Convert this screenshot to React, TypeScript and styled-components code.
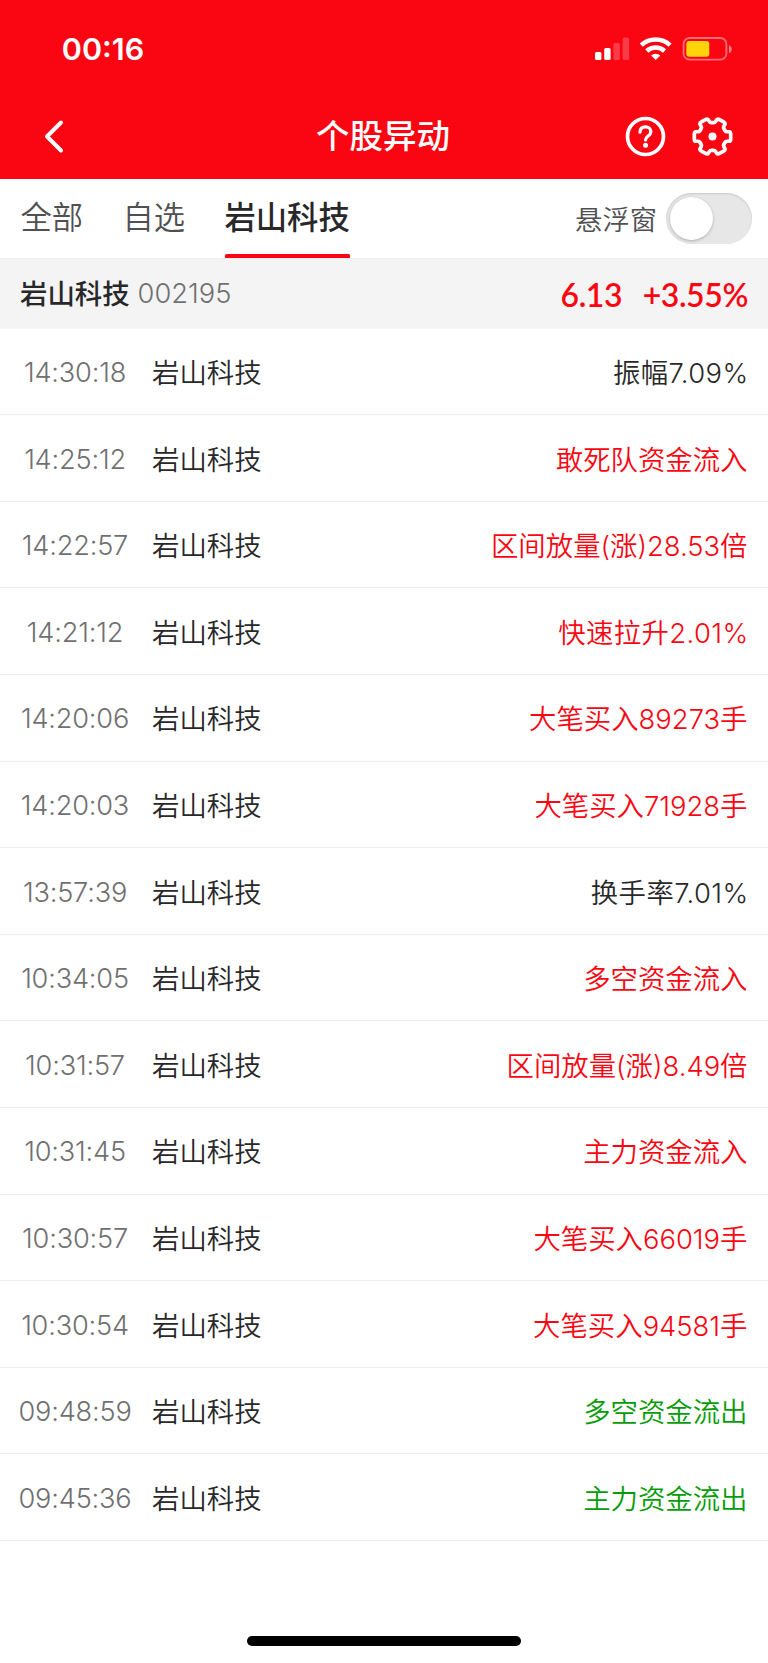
import React from 'react';
import styled, { createGlobalStyle } from 'styled-components';

const GlobalStyle = createGlobalStyle`
  * { box-sizing: border-box; }
  html { overflow: hidden; }
  body {
    margin: 0;
    background: #fff;
    font-family: Inter, "Noto Sans CJK SC", sans-serif;
    -webkit-font-smoothing: antialiased;
  }
`;

const Screen = styled.div`
  width: 768px;
  height: 1663px;
  display: flex;
  flex-direction: column;
  background: #fff;
  overflow: hidden;
  white-space: nowrap;
`;

const Header = styled.header`
  height: 179.3px;
  flex: none;
  background: #fa0612;
  color: #fff;
`;

const StatusBar = styled.div`
  height: 92px;
  padding: 5px 35px 0 61.8px;
  display: flex;
  align-items: center;
  justify-content: space-between;
`;

const Clock = styled.span`
  font-size: 30.5px;
  line-height: 36px;
  font-weight: 600;
  letter-spacing: 0;
`;

const StatusIcons = styled.svg`
  width: 138px;
  height: 28px;
  display: block;
`;

const NavBar = styled.div`
  height: 88px;
  padding: 0 35px 0 38px;
  display: grid;
  grid-template-columns: 103px 1fr 108px;
  align-items: center;
`;

const Title = styled.h1`
  margin: 0;
  font-size: 33.5px;
  line-height: 48px;
  font-weight: 500;
  text-align: center;
`;

const IconButton = styled.button`
  width: 41px;
  height: 41px;
  padding: 0;
  border: 0;
  background: none;
  color: inherit;
  svg { display: block; }
`;

const NavActions = styled.div`
  display: flex;
  justify-content: space-between;
`;

const TabBar = styled.div`
  height: 78.4px;
  flex: none;
  padding: 0 16px 0 20.5px;
  display: flex;
  justify-content: space-between;
`;

const Tabs = styled.nav`
  display: flex;
  gap: 39.4px;
`;

const Tab = styled.a<{ $active?: boolean }>`
  padding-top: 3px;
  font-size: 31.3px;
  line-height: 72px;
  font-weight: ${p => (p.$active ? 500 : 350)};
  color: ${p => (p.$active ? '#28282a' : '#505052')};
  display: flex;
  flex-direction: column;
  &::after {
    content: '';
    height: 3.4px;
    border-radius: 1.5px 1.5px 0 0;
    background: ${p => (p.$active ? '#fa0612' : 'transparent')};
  }
`;

const FloatControl = styled.label`
  display: flex;
  align-items: center;
  gap: 8.5px;
  font-size: 27.3px;
  font-weight: 350;
  color: #505052;
`;

const Switch = styled.span`
  width: 86.5px;
  height: 51px;
  padding: 4px;
  border-radius: 26px;
  background: #e7e7e7;
  box-shadow: inset 0 1px 2px rgba(0, 0, 0, 0.14);
`;

const Knob = styled.span`
  display: block;
  width: 43.5px;
  height: 43.5px;
  border-radius: 50%;
  background: #fff;
  box-shadow: 0 1px 3px rgba(0, 0, 0, 0.25);
`;

const StockBar = styled.div`
  height: 71px;
  flex: none;
  padding: 0 20px 1px 20px;
  display: flex;
  align-items: center;
  background: #f4f4f4;
  border-top: 1px solid #ededed;
`;

const StockName = styled.span`
  margin-top: -2px;
  font-size: 27.4px;
  font-weight: 500;
  color: #28282a;
`;

const StockCode = styled.span`
  margin: 1px 0 0 8px;
  font-size: 27.3px;
  font-weight: 300;
  color: #707072;
`;

const Quote = styled.span`
  margin: 2px 0 0 auto;
  display: flex;
  gap: 20.5px;
  font-family: Lato, sans-serif;
  font-size: 32px;
  font-weight: 600;
  letter-spacing: -0.4px;
  color: #fa0612;
`;

const List = styled.ul`
  margin: 0;
  padding: 0;
  list-style: none;
`;

const Row = styled.li`
  height: 86.6px;
  padding: 0 20.5px 0 15px;
  display: flex;
  align-items: center;
  border-bottom: 1px solid #ececec;
  font-size: 27.4px;
`;

const Time = styled.time`
  width: 120px;
  padding-top: 2px;
  text-align: center;
  font-size: 27.2px;
  font-weight: 300;
  letter-spacing: -0.2px;
  color: #707072;
  font-feature-settings: "calt" 0;
`;

const Name = styled.span`
  margin: -1px 0 0 17px;
  font-weight: 350;
  color: #28282a;
`;

const tones = { flat: '#28282a', up: '#fa0612', down: '#079c07' };

const Signal = styled.span<{ $tone: keyof typeof tones; $percent: boolean }>`
  margin: -1px ${p => (p.$percent ? '-1px' : '0')} 0 auto;
  font-weight: 350;
  letter-spacing: ${p => (p.$percent ? '0.4px' : 'normal')};
  color: ${p => tones[p.$tone]};
`;

const HomeArea = styled.footer`
  margin-top: auto;
  padding-bottom: 17px;
  display: flex;
  justify-content: center;
`;

const HomeIndicator = styled.div`
  width: 273.5px;
  height: 10px;
  border-radius: 5px;
  background: #000;
`;

// Outline of a six-toothed gear with softened corners, centred on (c, c).
const gearPath = (c: number) => {
  const points: [number, number][] = [];
  for (let tooth = 0; tooth < 6; tooth++) {
    for (const [radius, offset] of [[14, -20], [18.8, -14.5], [18.8, 14.5], [14, 20]]) {
      const angle = ((tooth * 60 + offset) * Math.PI) / 180;
      points.push([c + radius * Math.cos(angle), c + radius * Math.sin(angle)]);
    }
  }
  const mix = (a: number[], b: number[], t: number) =>
    `${(a[0] + (b[0] - a[0]) * t).toFixed(2)} ${(a[1] + (b[1] - a[1]) * t).toFixed(2)}`;
  return (
    points
      .map((p, i) => {
        const prev = points[(i + points.length - 1) % points.length];
        const next = points[(i + 1) % points.length];
        return `${i ? 'L' : 'M'}${mix(p, prev, 0.3)}Q${p[0].toFixed(2)} ${p[1].toFixed(2)} ${mix(p, next, 0.3)}`;
      })
      .join('') + 'Z'
  );
};

const events: [string, string, keyof typeof tones][] = [
  ['14:30:18', '振幅7.09%', 'flat'],
  ['14:25:12', '敢死队资金流入', 'up'],
  ['14:22:57', '区间放量(涨)28.53倍', 'up'],
  ['14:21:12', '快速拉升2.01%', 'up'],
  ['14:20:06', '大笔买入89273手', 'up'],
  ['14:20:03', '大笔买入71928手', 'up'],
  ['13:57:39', '换手率7.01%', 'flat'],
  ['10:34:05', '多空资金流入', 'up'],
  ['10:31:57', '区间放量(涨)8.49倍', 'up'],
  ['10:31:45', '主力资金流入', 'up'],
  ['10:30:57', '大笔买入66019手', 'up'],
  ['10:30:54', '大笔买入94581手', 'up'],
  ['09:48:59', '多空资金流出', 'down'],
  ['09:45:36', '主力资金流出', 'down'],
];

export default function App() {
  return (
    <Screen lang="zh-CN">
      <GlobalStyle />
      <Header>
        <StatusBar>
          <Clock>00:16</Clock>
          <StatusIcons viewBox="595 35 138 28">
            <g fill="#fff">
              <rect x="595" y="52" width="6.4" height="8" rx="1.6" />
              <rect x="604.2" y="48" width="6.4" height="12" rx="1.6" />
              <rect x="613.5" y="43" width="6.4" height="17" rx="1.6" opacity=".22" />
              <rect x="622.7" y="37.6" width="6.4" height="22.4" rx="1.6" opacity=".22" />
            </g>
            <g fill="none" stroke="#fff" strokeWidth="4.6">
              <path d="M641.3 45.2a21 21 0 0 1 28.8 0" />
              <path d="M646.8 51a13.2 13.2 0 0 1 17.8 0" />
            </g>
            <path d="M655.7 60l-4.6-4.5a6.6 6.6 0 0 1 9.2 0z" fill="#fff" />
            <rect x="683.6" y="38" width="42.8" height="21.7" rx="6" fill="none" stroke="#fff" strokeWidth="1.8" opacity=".42" />
            <path d="M729 45.2c3.6 1.2 3.6 6.6 0 7.8z" fill="#fff" opacity=".5" />
            <rect x="686.3" y="41" width="23" height="15.8" rx="3" fill="#ffd40a" />
          </StatusIcons>
        </StatusBar>
        <NavBar>
          <IconButton aria-label="返回">
            <svg width="41" height="41" viewBox="0 0 41 41" fill="none" stroke="#fff" strokeWidth="4" strokeLinecap="round" strokeLinejoin="round">
              <path d="M23 6.5L9 20.5L23 34.5" />
            </svg>
          </IconButton>
          <Title>个股异动</Title>
          <NavActions>
            <IconButton aria-label="帮助">
              <svg width="41" height="41" viewBox="0 0 41 41" fill="none" stroke="#fff" strokeWidth="3.7" strokeLinecap="round">
                <circle cx="20.5" cy="20.5" r="18" />
                <path d="M15 16.2c0-3.8 2.4-5.4 5.5-5.4s5.4 1.9 5.4 5c0 4.2-5.4 4.2-5.4 8.2" strokeWidth="3.2" />
                <circle cx="20.5" cy="29.2" r="2.5" fill="#fff" stroke="none" />
              </svg>
            </IconButton>
            <IconButton aria-label="设置">
              <svg width="41" height="41" viewBox="0 0 41 41" fill="none" stroke="#fff" strokeWidth="3.7" strokeLinejoin="round">
                <path d={gearPath(20.5)} />
                <circle cx="20.5" cy="20.5" r="4" fill="#fff" stroke="none" />
              </svg>
            </IconButton>
          </NavActions>
        </NavBar>
      </Header>
      <TabBar>
        <Tabs>
          <Tab>全部</Tab>
          <Tab>自选</Tab>
          <Tab $active>岩山科技</Tab>
        </Tabs>
        <FloatControl>
          悬浮窗
          <Switch role="switch" aria-checked="false">
            <Knob />
          </Switch>
        </FloatControl>
      </TabBar>
      <StockBar>
        <StockName>岩山科技</StockName>
        <StockCode>002195</StockCode>
        <Quote>
          <span>6.13</span>
          <span>+3.55%</span>
        </Quote>
      </StockBar>
      <List>
        {events.map(([time, text, tone]) => (
          <Row key={time}>
            <Time>{time}</Time>
            <Name>岩山科技</Name>
            <Signal $tone={tone} $percent={text.endsWith('%')}>{text}</Signal>
          </Row>
        ))}
      </List>
      <HomeArea>
        <HomeIndicator />
      </HomeArea>
    </Screen>
  );
}
